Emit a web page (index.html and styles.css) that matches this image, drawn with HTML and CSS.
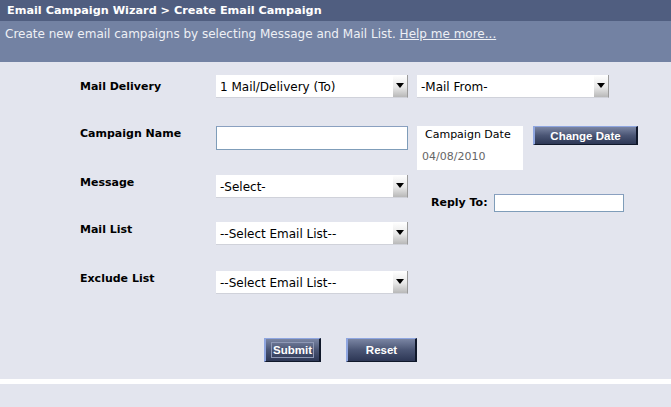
FILE: index.html
```html
<!DOCTYPE html>
<html>
<head>
<meta charset="utf-8">
<link rel="stylesheet" href="styles.css">
</head>
<body>
<div class="page">
  <div class="header">Email Campaign Wizard &gt; Create Email Campaign</div>
  <div class="sub">Create new email campaigns by selecting Message and Mail List. <a href="#" class="help">Help me more...</a></div>
  <div class="content">
    <div class="row row1">
      <div class="label label-mid">Mail Delivery</div>
      <div class="select"><span class="sel-text">1 Mail/Delivery (To)</span><span class="arrow"></span></div>
      <div class="select select-from"><span class="sel-text">-Mail From-</span><span class="arrow"></span></div>
    </div>
    <div class="row row2">
      <div class="label">Campaign Name</div>
      <div class="input"></div>
      <div class="datebox">
        <div class="date-title">Campaign Date</div>
        <div class="date-value">04/08/2010</div>
      </div>
      <div class="btn btn-date"><span>Change Date</span></div>
    </div>
    <div class="row row3">
      <div class="label">Message</div>
      <div class="select"><span class="sel-text">-Select-</span><span class="arrow"></span></div>
      <div class="reply">
        <span class="label reply-label">Reply To:</span>
        <div class="input input-reply"></div>
      </div>
    </div>
    <div class="row row4">
      <div class="label">Mail List</div>
      <div class="select"><span class="sel-text">--Select Email List--</span><span class="arrow"></span></div>
    </div>
    <div class="row row5">
      <div class="label">Exclude List</div>
      <div class="select"><span class="sel-text">--Select Email List--</span><span class="arrow"></span></div>
    </div>
    <div class="actions">
      <div class="btn btn-submit"><span class="focus">Submit</span></div>
      <div class="btn btn-reset"><span>Reset</span></div>
    </div>
  </div>
  <div class="stripe"></div>
  <div class="footer"></div>
</div>
</body>
</html>
```

FILE: styles.css
```css
html, body {
  margin: 0;
  padding: 0;
  background: #e3e5ee;
}
.page {
  width: 671px;
  height: 407px;
  overflow: hidden;
  font-family: "DejaVu Sans", Verdana, sans-serif;
  font-size: 11px;
  color: #000;
}
.header {
  height: 21px;
  line-height: 21px;
  background: #505e80;
  color: #fff;
  font-weight: bold;
  font-size: 11.25px;
  padding-left: 7px;
  box-sizing: border-box;
}
.sub {
  height: 41px;
  background: #7382a3;
  color: #eef0f5;
  font-size: 12px;
  padding: 6px 0 0 5px;
  box-sizing: border-box;
}
.help {
  color: #eef0f5;
  text-decoration: underline;
}
.content {
  height: 317px;
  box-sizing: border-box;
  padding: 13px 0 0 80px;
  background: #e3e5ee;
}
.row {
  display: flex;
  align-items: flex-start;
}
.row1 { height: 51px; }
.row2 { height: 49px; }
.row3 { height: 47px; }
.row4 { height: 49px; }
.row5 { height: 23px; }
.label {
  width: 136px;
  flex: none;
  font-weight: bold;
  font-size: 11px;
  line-height: 14px;
  padding-top: 1px;
}
.label-mid { padding-top: 5px; }
.select {
  width: 192px;
  height: 23px;
  box-sizing: border-box;
  background: #fff;
  border-right: 1px solid #9a9a9a;
  border-bottom: 1px solid #d0d2da;
  display: flex;
  align-items: center;
  flex: none;
}
.sel-text {
  padding-left: 4px;
  font-size: 12px;
  flex: 1;
  padding-top: 1px;
}
.arrow {
  width: 14px;
  height: 100%;
  background: linear-gradient(#ffffff, #e8e8e8 55%, #b8b8b8);
  position: relative;
}
.arrow::after {
  content: "";
  position: absolute;
  left: 3px;
  top: 8px;
  border-left: 4px solid transparent;
  border-right: 4px solid transparent;
  border-top: 5px solid #000;
}
.select-from { margin-left: 9px; }
.input {
  width: 192px;
  height: 24px;
  box-sizing: border-box;
  background: #fff;
  border: 1px solid #7f9db9;
  border-top-color: #8aa0c0;
  flex: none;
}
.datebox {
  margin-left: 9px;
  width: 106px;
  height: 44px;
  background: #fff;
  box-sizing: border-box;
  padding: 2px 0 0 5px;
  flex: none;
}
.date-title {
  font-size: 11px;
  line-height: 14px;
  padding-left: 3px;
}
.date-value {
  font-size: 11px;
  color: #666;
  margin-top: 8px;
  line-height: 14px;
}
.btn {
  display: flex;
  align-items: center;
  justify-content: center;
  box-sizing: border-box;
  background: linear-gradient(#7a85a3, #4a5574 50%, #2d3755);
  border-top: 1px solid #8fa6e0;
  border-left: 2px solid #8fa6e0;
  border-right: 2px solid #10182a;
  border-bottom: 1px solid #10182a;
  color: #fff;
  font-family: "Liberation Sans", Arial, sans-serif;
  font-weight: bold;
  font-size: 11.5px;
  flex: none;
}
.btn-date {
  margin-left: 10px;
  width: 105px;
  height: 19px;
}
.reply {
  margin-left: 23px;
  margin-top: 19px;
  display: flex;
  align-items: center;
}
.reply-label {
  width: auto;
  padding: 0;
  margin-right: 6px;
  font-size: 11px;
}
.input-reply {
  width: 130px;
  height: 18px;
}
.actions {
  display: flex;
  padding-left: 184px;
  margin-top: 44px;
  gap: 25px;
}
.btn-submit {
  width: 57px;
  height: 24px;
}
.btn-reset {
  width: 71px;
  height: 24px;
}
.focus {
  border: 1px solid #8e98b5;
  padding: 0 1px;
  line-height: 14px;
}
.stripe {
  height: 5px;
  background: #fff;
}
.footer {
  height: 23px;
  background: #e3e5ee;
}
```
